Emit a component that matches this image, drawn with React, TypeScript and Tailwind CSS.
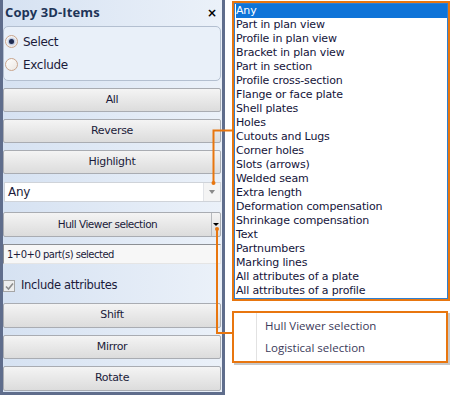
import React from 'react';

const items = [
  'Any',
  'Part in plan view',
  'Profile in plan view',
  'Bracket in plan view',
  'Part in section',
  'Profile cross-section',
  'Flange or face plate',
  'Shell plates',
  'Holes',
  'Cutouts and Lugs',
  'Corner holes',
  'Slots (arrows)',
  'Welded seam',
  'Extra length',
  'Deformation compensation',
  'Shrinkage compensation',
  'Text',
  'Partnumbers',
  'Marking lines',
  'All attributes of a plate',
  'All attributes of a profile',
];

const tahoma = "font-['DejaVu_Sans',sans-serif] text-[11px] tracking-[-0.3px]";

function PanelButton({ label, className = '' }: { label: string; className?: string }) {
  return (
    <div
      className={`h-[24px] mr-[1px] flex items-center justify-center rounded-[2px] border border-[#a9acb2] bg-gradient-to-b from-[#f4f4f4] to-[#dcdcdc] text-[#1b1b3a] ${tahoma} ${className}`}
    >
      {label}
    </div>
  );
}

function Radio({ checked, label }: { checked?: boolean; label: string }) {
  return (
    <div className="flex items-center gap-[5px] h-[23px]">
      <div className="w-[13px] h-[13px] rounded-full border border-[#c9a58c] bg-gradient-to-br from-[#ffffff] to-[#ece7e2] flex items-center justify-center">
        {checked && <div className="w-[5px] h-[5px] rounded-full bg-[#1e2a4f] shadow-[0_0_2px_1px_#9fb3d9]" />}
      </div>
      <span className="text-[#1b1b3a] font-['DejaVu_Sans',sans-serif] text-[12px] tracking-[-0.3px]">{label}</span>
    </div>
  );
}

export default function App() {
  return (
    <div className="relative w-[450px] h-[395px] bg-white flex">
      {/* left tool panel */}
      <div className="w-[225px] h-[395px] border-l-[3px] border-r-[3px] border-b-[3px] border-[#5f6d8c] bg-gradient-to-r from-[#d6e2f2] to-[#ebf1f9] flex flex-col">
        <div className="h-[25px] flex items-center justify-between pl-[2px] pr-[5px]">
          <span className="font-['Open_Sans',sans-serif] font-bold text-[13px] tracking-[0.1px] text-[#1e3558]">Copy 3D-Items</span>
          <span className="font-['DejaVu_Sans',sans-serif] font-bold text-[12px] text-black">×</span>
        </div>
        <div className="h-[55px] mr-[1px] mt-[1px] rounded-[5px] border border-[#b3bfd0] bg-[#e9f0f9] px-[1px] pt-[3px] flex flex-col">
          <Radio checked label="Select" />
          <Radio label="Exclude" />
        </div>
        <PanelButton label="All" className="mt-[7px]" />
        <PanelButton label="Reverse" className="mt-[7px]" />
        <PanelButton label="Highlight" className="mt-[7px]" />
        <div className="mt-[8px] ml-[1px] mr-[1px] h-[20px] flex border border-[#cfd3d9] bg-white">
          <div className="flex-1 flex items-center pl-[3px] text-[#1b1b3a] font-['DejaVu_Sans',sans-serif] text-[12px] tracking-[-0.3px]">Any</div>
          <div className="w-[17px] border-l border-[#e2e4e8] bg-[#f4f4f4] flex items-center justify-center">
            <div className="w-0 h-0 border-l-[3px] border-r-[3px] border-t-[4px] border-l-transparent border-r-transparent border-t-[#8a8a8a]" />
          </div>
        </div>
        <div className="mt-[10px] mr-[1px] h-[25px] flex rounded-[2px] border border-[#a9acb2] bg-gradient-to-b from-[#f4f4f4] to-[#dcdcdc]">
          <div className="flex-1 flex items-center justify-center text-[#1b1b3a] font-['DejaVu_Sans',sans-serif] text-[10.5px] tracking-[-0.5px]">
            Hull Viewer selection
          </div>
          <div className="w-[9px] border-l border-[#b5b8bd] flex items-center justify-center">
            <div className="w-0 h-0 border-l-[3px] border-r-[3px] border-t-[3px] border-l-transparent border-r-transparent border-t-black" />
          </div>
        </div>
        <div className="mt-[7px] mr-[1px] h-[20px] flex items-center pl-[3px] border border-[#8c8f94] border-r-[#e5e5e5] border-b-[#e5e5e5] bg-[#f7f7f7] text-[#1b1b3a] font-['DejaVu_Sans',sans-serif] text-[10px] tracking-[-0.5px]">
          1+0+0 part(s) selected
        </div>
        <div className="mt-[15px] h-[14px] flex items-center gap-[6px]">
          <div className="w-[12px] h-[12px] border border-[#a5a5a5] bg-[#eeeeee] flex items-center justify-center">
            <svg width="9" height="9" viewBox="0 0 9 9">
              <path d="M1 4.5 L3.5 7 L8 1.5" fill="none" stroke="#8d8d8d" strokeWidth="1.6" />
            </svg>
          </div>
          <span className="text-[#1b1b3a] font-['DejaVu_Sans',sans-serif] text-[11.5px] tracking-[-0.3px]">Include attributes</span>
        </div>
        <PanelButton label="Shift" className="mt-[10px] h-[25px]" />
        <PanelButton label="Mirror" className="mt-[7px]" />
        <PanelButton label="Rotate" className="mt-[7px] h-[25px]" />
      </div>

      {/* right side */}
      <div className="flex-1 flex flex-col pl-[7px] pt-[1px]">
        <div className="w-[218px] border-2 border-[#e8760f]">
          <div className="border border-[#2f7fd0] bg-white pl-[1px]">
            {items.map((it, i) => (
              <div
                key={it}
                className={`h-[14px] leading-[14px] font-['DejaVu_Sans',sans-serif] text-[11px] tracking-[-0.15px] ${i === 0 ? 'bg-[#0f74d8] text-white' : 'text-[#14143a]'}`}
              >
                {it}
              </div>
            ))}
          </div>
        </div>
        <div className="mt-[10px] w-[216px] h-[52px] border-2 border-[#e8760f] bg-white shadow-[2px_2px_0_#c8c8c8] flex">
          <div className="w-[23px] border-r border-[#e2e2e2]" />
          <div className="flex flex-col pl-[8px] pt-[2px] font-['Open_Sans',sans-serif] text-[11.5px] text-[#3b3a5a]">
            <div className="h-[22px] flex items-center">Hull Viewer selection</div>
            <div className="h-[22px] flex items-center">Logistical selection</div>
          </div>
        </div>
      </div>

      {/* annotation connectors */}
      <svg className="absolute left-0 top-0 pointer-events-none" width="450" height="395">
        <path d="M233 130.5 H213.5 V183" fill="none" stroke="#e8760f" strokeWidth="2" />
        <circle cx="213.5" cy="183" r="2" fill="#e8760f" />
        <path d="M217 229 V333 H233" fill="none" stroke="#e8760f" strokeWidth="2" />
        <circle cx="217" cy="229" r="2" fill="#e8760f" />
      </svg>
    </div>
  );
}
